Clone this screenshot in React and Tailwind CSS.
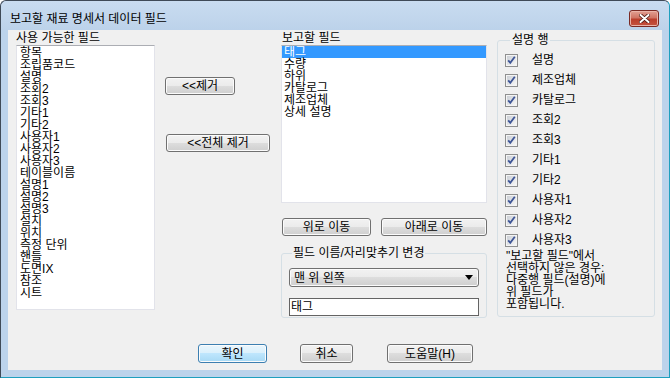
import React from 'react';

const availableFields = [
  "항목", "조립품코드", "설명", "조회2", "조회3", "기타1", "기타2",
  "사용자1", "사용자2", "사용자3", "테이블이름", "설명1", "설명2", "설명3",
  "설치", "위치", "측정 단위", "핸들", "도면IX", "참조", "시트",
];

const reportFields = ["태그", "수량", "하위", "카탈로그", "제조업체", "상세 설명"];

const descRows = ["설명", "제조업체", "카탈로그", "조회2", "조회3", "기타1", "기타2", "사용자1", "사용자2", "사용자3"];

// Win7 style push button
const Btn = ({ children, className = "", primary = false }) => (
  <button
    className={`h-[18px] rounded-[3px] border text-[12px] leading-[14px] text-black shadow-[inset_0_0_0_1px_#fbfbfb] ${
      primary
        ? "border-[#3c7fb1] bg-[linear-gradient(#eaf6fd_0%,#d9f0fc_50%,#bee6fd_50%,#a7d9f5_100%)] shadow-[inset_0_0_0_1px_#c8ecfc]"
        : "border-[#707070] bg-[linear-gradient(#f2f2f2_0%,#ebebeb_50%,#dddddd_50%,#cfcfcf_100%)]"
    } ${className}`}
  >
    {children}
  </button>
);

const CheckBox = () => (
  <svg width="13" height="13" viewBox="0 0 13 13" className="shrink-0">
    <defs>
      <linearGradient id="cbg" x1="0" y1="0" x2="1" y2="1">
        <stop offset="0" stopColor="#cbcfd5" />
        <stop offset="1" stopColor="#f7f7f7" />
      </linearGradient>
    </defs>
    <rect x="0.5" y="0.5" width="12" height="12" fill="#f4f4f4" stroke="#8f8f8f" />
    <rect x="2" y="2" width="9" height="9" fill="url(#cbg)" />
    <path d="M3.2 6.3 L5.3 8.8 L9.8 2.8" fill="none" stroke="#3d5496" strokeWidth="1.8" />
  </svg>
);

const App = () => {
  return (
    <div className="w-[670px] h-[378px] font-['Liberation_Sans','Noto_Sans_CJK_KR',sans-serif] text-[12px] text-black">
      <div className="w-[670px] h-[378px] flex flex-col rounded-t-[6px] border border-[#3f4a57] border-b-[#1e9fbe] border-r-[#1e9fbe] bg-[#bcd3eb]">
        {/* Title bar */}
        <div className="h-[29px] flex items-start justify-between bg-[linear-gradient(#c9dcf0,#bcd2ea)] rounded-t-[6px]">
          <span className="ml-[9px] mt-[11px] leading-[14px]">보고할 재료 명세서 데이터 필드</span>
          <div className="mr-[10px] mt-[9px] w-[30px] h-[17px] rounded-[3px] border border-[#7a2a24] bg-[linear-gradient(#e2a093_0%,#d07565_45%,#bb3e2c_55%,#c4533f_100%)] flex items-center justify-center shadow-[inset_0_0_0_1px_#eab3a8]">
            <svg width="11" height="9" viewBox="0 0 11 9">
              <path d="M1.5 1 L9.5 8 M9.5 1 L1.5 8" stroke="#4a1a14" strokeWidth="3.6" strokeLinecap="round" />
              <path d="M1.5 1 L9.5 8 M9.5 1 L1.5 8" stroke="#ffffff" strokeWidth="2" strokeLinecap="round" />
            </svg>
          </div>
        </div>

        {/* Client area */}
        <div className="mx-[7px] w-[654px] h-[340px] bg-[#f0f0f0] flex flex-col">
          <div className="h-[288px] flex pl-[8px] pt-[1px]">
            {/* Available fields */}
            <div className="w-[139px] flex flex-col">
              <div className="h-[14px] leading-[14px]">사용 가능한 필드</div>
              <div className="h-[265px] bg-white border border-[#e2e3ea] border-t-[#abadb3] pl-[3px] pt-[1px] overflow-hidden">
                {availableFields.map((f, i) => (
                  <div key={i} className="h-[12px] leading-[12px] whitespace-nowrap">{f}</div>
                ))}
              </div>
            </div>

            {/* Remove buttons */}
            <div className="ml-[10px] w-[105px] flex flex-col items-start pt-[46px]">
              <Btn className="w-[70px]">&lt;&lt;제거</Btn>
              <Btn className="w-[104px] mt-[39px] ml-[1px]">&lt;&lt;전체 제거</Btn>
            </div>

            {/* Report fields */}
            <div className="ml-[11px] w-[206px] flex flex-col">
              <div className="h-[14px] leading-[14px] pl-[1px]">보고할 필드</div>
              <div className="h-[158px] bg-white border border-[#e2e3ea] border-t-[#abadb3] overflow-hidden">
                {reportFields.map((f, i) => (
                  <div
                    key={i}
                    className={`h-[12px] leading-[12px] pl-[2px] whitespace-nowrap ${i === 0 ? "bg-[#3399ff] text-white" : ""}`}
                  >
                    {f}
                  </div>
                ))}
              </div>
              <div className="mt-[15px] flex">
                <Btn className="w-[89px] ml-[1px]">위로 이동</Btn>
                <Btn className="w-[106px] ml-[10px]">아래로 이동</Btn>
              </div>
              <fieldset className="mt-[9px] border border-[#d5dfe5] rounded-[3px] px-[7px] pb-[1px]">
                <legend className="ml-[3px] px-[1px] leading-[16px]">필드 이름/자리맞추기 변경</legend>
                <div className="mt-[7px] h-[19px] rounded-[3px] border border-[#707070] bg-[linear-gradient(#f2f2f2_0%,#ebebeb_50%,#dddddd_50%,#cfcfcf_100%)] shadow-[inset_0_0_0_1px_#fbfbfb] flex items-center justify-between pl-[4px] pr-[5px]">
                  <span className="leading-[14px]">맨 위 왼쪽</span>
                  <svg width="8" height="5" viewBox="0 0 8 5">
                    <path d="M0 0 L8 0 L4 5 Z" fill="#000" />
                  </svg>
                </div>
                <div className="mt-[11px] h-[18px] bg-white border border-[#646464] pl-[1px] leading-[16px]">태그</div>
              </fieldset>
            </div>

            {/* Description rows */}
            <div className="ml-[10px] w-[158px] flex flex-col">
              <fieldset className="mt-[1px] border border-[#d5dfe5] rounded-[3px] pl-[7px] pb-[6px]">
                <legend className="ml-[5px] px-[2px] leading-[16px]">설명 행</legend>
                <div className="mt-[2px] flex flex-col">
                  {descRows.map((r, i) => (
                    <div key={i} className="h-[20px] flex items-center">
                      <CheckBox />
                      <span className="ml-[14px] leading-[14px]">{r}</span>
                    </div>
                  ))}
                </div>
                <div className="pl-[1px] leading-[12px]">
                  <div>"보고할 필드"에서</div>
                  <div>선택하지 않은 경우:</div>
                  <div>다중행 필드(설명)에</div>
                  <div>위 필드가</div>
                  <div>포함됩니다.</div>
                </div>
              </fieldset>
            </div>
          </div>

          {/* Dialog buttons */}
          <div className="pt-[26px] pl-[190px] flex">
            <Btn primary className="w-[69px] h-[19px]">확인</Btn>
            <Btn className="w-[53px] h-[19px] ml-[33px]">취소</Btn>
            <Btn className="w-[86px] h-[19px] ml-[34px]">도움말(H)</Btn>
          </div>
        </div>
      </div>
    </div>
  );
};

export default App;
